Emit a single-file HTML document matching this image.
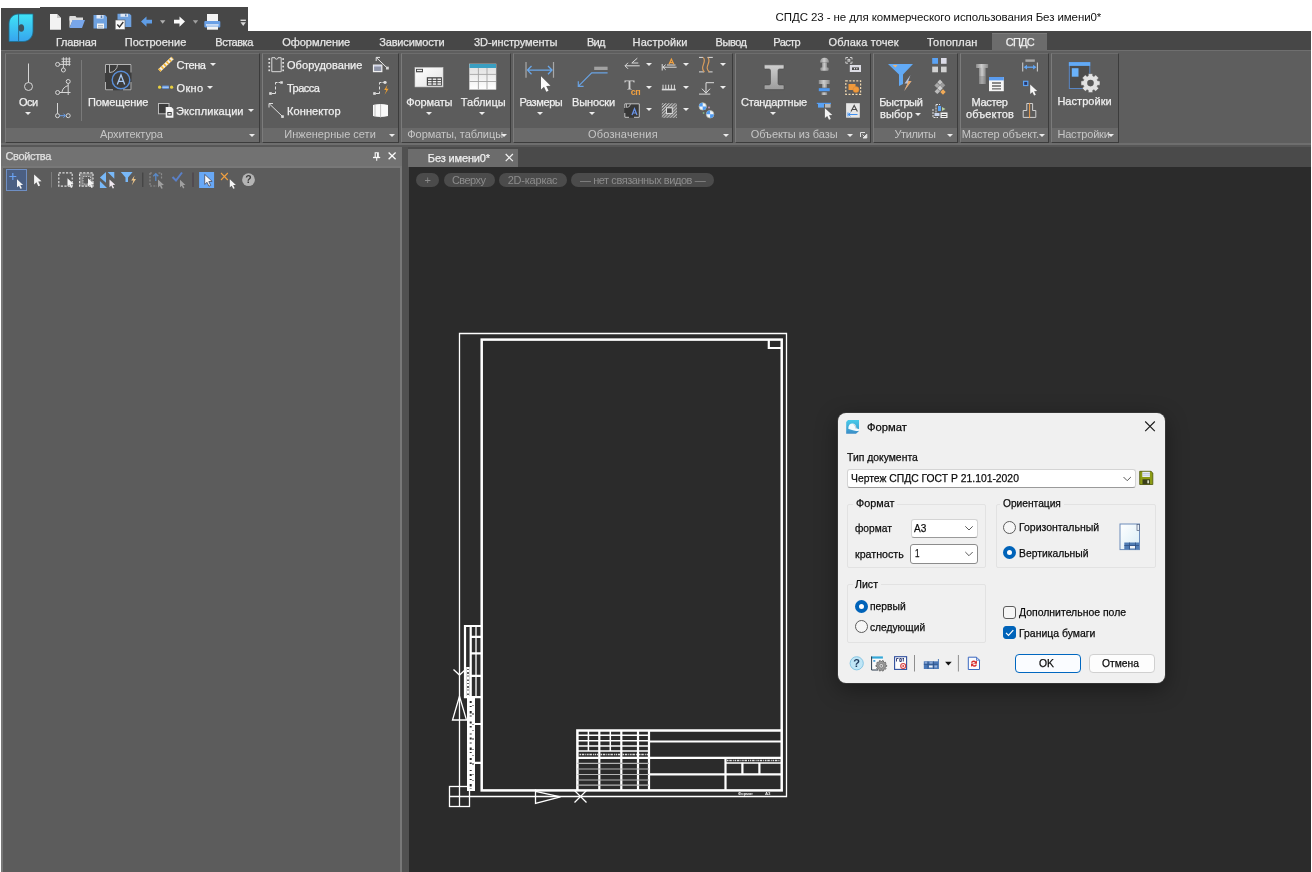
<!DOCTYPE html>
<html lang="ru"><head><meta charset="utf-8"><title>СПДС 23 - Без имени0*</title>
<style>
html,body{margin:0;padding:0;}
body{width:1312px;height:872px;overflow:hidden;background:#fff;position:relative;font-family:"Liberation Sans",sans-serif;}
.a{position:absolute;}
.t{position:absolute;white-space:pre;font-family:"Liberation Sans",sans-serif;}
svg{position:absolute;overflow:visible;}
.grp{position:absolute;top:53px;height:90px;box-sizing:border-box;background:#5c5c5c;border-top:1px solid #6d6d6d;border-left:1px solid #7b7b7b;border-right:1px solid #3c3c3c;border-bottom:1px solid #3c3c3c;}
.grp i{position:absolute;left:0;right:0;top:74px;bottom:0;background:#6a6a6a;}
.dd{position:absolute;width:0;height:0;margin-left:.3px;border-left:3.2px solid transparent;border-right:3.2px solid transparent;border-top:3.6px solid #ececec;}
.pill{position:absolute;top:172.500px;height:14.500px;border-radius:7.250px;background:#4b4b4b;}
.cb{position:absolute;box-sizing:border-box;background:#fff;border:1px solid #d4d4d4;border-bottom-color:#9a9a9a;border-radius:3px;}
.gb{position:absolute;box-sizing:border-box;border:1px solid #e2e2e2;border-radius:2px;}
.btn{position:absolute;box-sizing:border-box;background:#fdfdfd;border:1px solid #d0d0d0;border-radius:4px;}
.rd{position:absolute;box-sizing:border-box;width:13px;height:13px;border-radius:50%;border:1px solid #5c5c5c;background:#f6f6f6;}
.rd.on{border:4px solid #0063b9;background:#fff;}
.ck{position:absolute;box-sizing:border-box;width:13px;height:13px;border-radius:3px;border:1px solid #5c5c5c;background:#f6f6f6;}
.gl{position:absolute;background:#f0f0f0;height:12px;}
#w{position:absolute;left:0;top:0;width:1312px;height:872px;will-change:transform;}
</style></head><body><div id="w">
<!-- window chrome -->
<div class="a" style="left:1px;top:8px;width:40px;height:30px;background:#474747"></div>
<div class="a" style="left:40px;top:7px;width:208px;height:30px;background:#474747"></div>
<div class="a" style="left:1px;top:31px;width:1310px;height:20px;background:#474747"></div>
<div class="a" style="left:1px;top:50px;width:1310px;height:1px;background:#6f6f6f"></div>
<div class="a" style="left:1px;top:51px;width:1310px;height:94px;background:#5e5e5e"></div>
<div class="a" style="left:1px;top:143px;width:1310px;height:2px;background:#6e6e6e"></div>
<div class="a" style="left:1px;top:145px;width:1310px;height:2px;background:#575757"></div>
<!-- active tab -->
<div class="a" style="left:992px;top:33px;width:55px;height:18px;background:#6c6c6c;border-top:1px solid #7a7a7a;box-sizing:border-box"></div>

<!-- window title -->
<span class="t" style="left:775.6px;top:9.8px;font-size:11.5px;line-height:15px;color:#111;letter-spacing:-0.091px;">СПДС 23 - не для коммерческого использования Без имени0*</span>
<!-- tabs -->
<span class="t" style="left:55.9px;top:34.5px;font-size:11px;line-height:14px;color:#e6e6e6;letter-spacing:-0.196px;-webkit-text-stroke:.25px;">Главная</span>
<span class="t" style="left:124.8px;top:34.5px;font-size:11px;line-height:14px;color:#e6e6e6;letter-spacing:0.023px;-webkit-text-stroke:.25px;">Построение</span>
<span class="t" style="left:215.3px;top:34.5px;font-size:11px;line-height:14px;color:#e6e6e6;letter-spacing:-0.484px;-webkit-text-stroke:.25px;">Вставка</span>
<span class="t" style="left:282.2px;top:34.5px;font-size:11px;line-height:14px;color:#e6e6e6;letter-spacing:-0.028px;-webkit-text-stroke:.25px;">Оформление</span>
<span class="t" style="left:379.2px;top:34.5px;font-size:11px;line-height:14px;color:#e6e6e6;letter-spacing:-0.142px;-webkit-text-stroke:.25px;">Зависимости</span>
<span class="t" style="left:474.1px;top:34.5px;font-size:11px;line-height:14px;color:#e6e6e6;letter-spacing:-0.104px;-webkit-text-stroke:.25px;">3D-инструменты</span>
<span class="t" style="left:586.9px;top:34.5px;font-size:11px;line-height:14px;color:#e6e6e6;letter-spacing:-0.702px;-webkit-text-stroke:.25px;">Вид</span>
<span class="t" style="left:632.6px;top:34.5px;font-size:11px;line-height:14px;color:#e6e6e6;letter-spacing:0.107px;-webkit-text-stroke:.25px;">Настройки</span>
<span class="t" style="left:715.6px;top:34.5px;font-size:11px;line-height:14px;color:#e6e6e6;letter-spacing:-0.473px;-webkit-text-stroke:.25px;">Вывод</span>
<span class="t" style="left:773.3px;top:34.5px;font-size:11px;line-height:14px;color:#e6e6e6;letter-spacing:-0.610px;-webkit-text-stroke:.25px;">Растр</span>
<span class="t" style="left:828.6px;top:34.5px;font-size:11px;line-height:14px;color:#e6e6e6;letter-spacing:0.135px;-webkit-text-stroke:.25px;">Облака точек</span>
<span class="t" style="left:927.0px;top:34.5px;font-size:11px;line-height:14px;color:#e6e6e6;letter-spacing:0.259px;-webkit-text-stroke:.25px;">Топоплан</span>
<span class="t" style="left:1005.8px;top:34.5px;font-size:11px;line-height:14px;color:#f0f0f0;letter-spacing:-0.762px;-webkit-text-stroke:.25px;">СПДС</span>
<!-- groups -->
<div class="grp" style="left:5px;width:255px"><i></i></div>
<div class="grp" style="left:262px;width:137px"><i></i></div>
<div class="grp" style="left:401px;width:110px"><i></i></div>
<div class="grp" style="left:513px;width:220px"><i></i></div>
<div class="grp" style="left:735px;width:136px"><i></i></div>
<div class="grp" style="left:873px;width:85px"><i></i></div>
<div class="grp" style="left:960px;width:89px"><i></i></div>
<div class="grp" style="left:1051px;width:68px"><i></i></div>
<!-- group 1 -->
<div class="a" style="left:81px;top:60px;width:1px;height:61px;background:#7a7a7a"></div>
<span class="t" style="left:18.9px;top:94.5px;font-size:11px;line-height:14px;color:#efefef;letter-spacing:-0.434px;-webkit-text-stroke:.25px;">Оси</span>
<div class="dd" style="left:24.5px;top:112px"></div>
<span class="t" style="left:88.0px;top:94.5px;font-size:11px;line-height:14px;color:#efefef;letter-spacing:-0.099px;-webkit-text-stroke:.25px;">Помещение</span>
<span class="t" style="left:176.6px;top:58.0px;font-size:11px;line-height:14px;color:#efefef;letter-spacing:-0.454px;-webkit-text-stroke:.25px;">Стена</span>
<div class="dd" style="left:209.3px;top:63px"></div>
<span class="t" style="left:176.6px;top:81.0px;font-size:11px;line-height:14px;color:#efefef;letter-spacing:0.284px;-webkit-text-stroke:.25px;">Окно</span>
<div class="dd" style="left:207.1px;top:86px"></div>
<span class="t" style="left:176.0px;top:103.6px;font-size:11px;line-height:14px;color:#efefef;letter-spacing:0.089px;-webkit-text-stroke:.25px;">Экспликации</span>
<div class="dd" style="left:247.5px;top:109px"></div>
<span class="t" style="left:99.9px;top:127.2px;font-size:11px;line-height:14px;color:#c6c6c6;letter-spacing:-0.074px;">Архитектура</span>
<div class="dd" style="left:248.7px;top:134px"></div>
<!-- group 2 -->
<span class="t" style="left:287.0px;top:58.2px;font-size:11px;line-height:14px;color:#efefef;letter-spacing:0.056px;-webkit-text-stroke:.25px;">Оборудование</span>
<span class="t" style="left:287.0px;top:80.9px;font-size:11px;line-height:14px;color:#efefef;letter-spacing:-0.528px;-webkit-text-stroke:.25px;">Трасса</span>
<span class="t" style="left:287.0px;top:103.7px;font-size:11px;line-height:14px;color:#efefef;letter-spacing:0.101px;-webkit-text-stroke:.25px;">Коннектор</span>
<span class="t" style="left:284.3px;top:127.2px;font-size:11px;line-height:14px;color:#c6c6c6;letter-spacing:0.009px;">Инженерные сети</span>
<div class="dd" style="left:388.3px;top:134px"></div>
<!-- group 3 -->
<span class="t" style="left:406.2px;top:94.5px;font-size:11px;line-height:14px;color:#efefef;letter-spacing:-0.112px;-webkit-text-stroke:.25px;">Форматы</span>
<div class="dd" style="left:425.5px;top:112px"></div>
<span class="t" style="left:460.8px;top:94.5px;font-size:11px;line-height:14px;color:#efefef;letter-spacing:-0.003px;-webkit-text-stroke:.25px;">Таблицы</span>
<div class="dd" style="left:478.5px;top:112px"></div>
<span class="t" style="left:407.3px;top:127.2px;font-size:11px;line-height:14px;color:#c6c6c6;letter-spacing:-0.063px;">Форматы, таблицы</span>
<div class="dd" style="left:500.3px;top:134px"></div>
<!-- group 4 -->
<span class="t" style="left:519.4px;top:94.5px;font-size:11px;line-height:14px;color:#efefef;letter-spacing:-0.388px;-webkit-text-stroke:.25px;">Размеры</span>
<div class="dd" style="left:537px;top:112px"></div>
<span class="t" style="left:572.0px;top:94.5px;font-size:11px;line-height:14px;color:#efefef;letter-spacing:-0.129px;-webkit-text-stroke:.25px;">Выноски</span>
<div class="dd" style="left:588.7px;top:112px"></div>
<span class="t" style="left:588.0px;top:127.2px;font-size:11px;line-height:14px;color:#c6c6c6;letter-spacing:0.175px;">Обозначения</span>
<div class="dd" style="left:722.5px;top:134px"></div>
<!-- group 5 -->
<span class="t" style="left:741.0px;top:94.5px;font-size:11px;line-height:14px;color:#efefef;letter-spacing:-0.237px;-webkit-text-stroke:.25px;">Стандартные</span>
<div class="dd" style="left:770px;top:112px"></div>
<span class="t" style="left:750.7px;top:127.2px;font-size:11px;line-height:14px;color:#c6c6c6;letter-spacing:-0.050px;">Объекты из базы</span>
<div class="dd" style="left:847px;top:134px"></div>
<!-- group 6 -->
<span class="t" style="left:879.3px;top:94.5px;font-size:11px;line-height:14px;color:#efefef;letter-spacing:-0.392px;-webkit-text-stroke:.25px;">Быстрый</span>
<span class="t" style="left:880.0px;top:106.7px;font-size:11px;line-height:14px;color:#efefef;letter-spacing:0.081px;-webkit-text-stroke:.25px;">выбор</span>
<div class="dd" style="left:915px;top:113px"></div>
<span class="t" style="left:894.5px;top:127.2px;font-size:11px;line-height:14px;color:#c6c6c6;letter-spacing:-0.398px;">Утилиты</span>
<div class="dd" style="left:947px;top:134px"></div>
<!-- group 7 -->
<span class="t" style="left:971.6px;top:94.5px;font-size:11px;line-height:14px;color:#efefef;letter-spacing:-0.344px;-webkit-text-stroke:.25px;">Мастер</span>
<span class="t" style="left:966.0px;top:106.7px;font-size:11px;line-height:14px;color:#efefef;letter-spacing:0.130px;-webkit-text-stroke:.25px;">объектов</span>
<span class="t" style="left:961.8px;top:127.2px;font-size:11px;line-height:14px;color:#c6c6c6;letter-spacing:-0.055px;">Мастер объект.</span>
<div class="dd" style="left:1038.8px;top:134px"></div>
<!-- group 8 -->
<span class="t" style="left:1057.4px;top:94.3px;font-size:11px;line-height:14px;color:#efefef;letter-spacing:0.040px;-webkit-text-stroke:.25px;">Настройки</span>
<span class="t" style="left:1057.4px;top:127.2px;font-size:11px;line-height:14px;color:#c6c6c6;letter-spacing:-0.182px;">Настройки</span>
<div class="dd" style="left:1108px;top:134px"></div>
<!--G4DD-->
<div class="dd" style="left:645.5px;top:62.7px"></div>
<div class="dd" style="left:645.5px;top:85.7px"></div>
<div class="dd" style="left:645.5px;top:108.4px"></div>
<div class="dd" style="left:682.8px;top:62.7px"></div>
<div class="dd" style="left:682.8px;top:85.7px"></div>
<div class="dd" style="left:682.8px;top:108.4px"></div>
<div class="dd" style="left:720.2px;top:62.7px"></div>
<div class="dd" style="left:720.2px;top:85.7px"></div>
<span class="t" style="left:630.8px;top:86.3px;font-size:9px;line-height:12px;color:#f0a040;letter-spacing:-0.627px;font-weight:700;">сп</span>

<!-- left panel -->
<div class="a" style="left:1px;top:147px;width:1310px;height:725px;background:#505050"></div>
<div class="a" style="left:1px;top:147px;width:401px;height:19px;background:#727272"></div>
<div class="a" style="left:1px;top:166px;width:401px;height:706px;background:#787878"></div>
<div class="a" style="left:2.500px;top:167.500px;width:397px;height:705px;background:#5c5c5c"></div>
<!-- doc tabs -->
<div class="a" style="left:408px;top:147px;width:903px;height:20px;background:#4a4a4a"></div>
<div class="a" style="left:408px;top:148.500px;width:110px;height:18.500px;background:#6c6c6c"></div>
<!-- drawing area -->
<div class="a" style="left:409px;top:167px;width:902px;height:705px;background:#2b2b2b"></div>
<span class="t" style="left:5.5px;top:148.6px;font-size:11px;line-height:14px;color:#e0e0e0;letter-spacing:-0.352px;-webkit-text-stroke:.25px;">Свойства</span>
<span class="t" style="left:427.8px;top:150.5px;font-size:11px;line-height:14px;color:#f0f0f0;letter-spacing:-0.131px;-webkit-text-stroke:.25px;">Без имени0*</span>
<div class="pill" style="left:415.5px;width:23.5px"></div>
<div class="pill" style="left:443.6px;width:51.3px"></div>
<div class="pill" style="left:498.5px;width:68.5px"></div>
<div class="pill" style="left:570.8px;width:143.6px"></div>
<span class="t" style="left:424.5px;top:173.0px;font-size:11px;line-height:14px;color:#8c8c8c;letter-spacing:-0.438px;">+</span>
<span class="t" style="left:451.9px;top:173.2px;font-size:11px;line-height:14px;color:#8c8c8c;letter-spacing:-0.547px;">Сверху</span>
<span class="t" style="left:507.7px;top:173.2px;font-size:11px;line-height:14px;color:#8c8c8c;letter-spacing:-0.221px;">2D-каркас</span>
<span class="t" style="left:580.0px;top:173.2px;font-size:11px;line-height:14px;color:#8c8c8c;letter-spacing:-0.442px;">— нет связанных видов —</span>

<svg width="1312" height="872" viewBox="0 0 1312 872" style="left:0;top:0">
<defs>
<linearGradient id="lg" x1="0" y1="0" x2="0" y2="1"><stop offset="0" stop-color="#40e4f6"/><stop offset="1" stop-color="#36a4ee"/></linearGradient>
<linearGradient id="met" x1="0" y1="0" x2="1" y2="0"><stop offset="0" stop-color="#9a9a9a"/><stop offset=".5" stop-color="#e0e0e0"/><stop offset="1" stop-color="#8e8e8e"/></linearGradient>
</defs>
<!-- app logo -->
<path d="M9 41.5V24c0-6 4-10 10-10h14v17c0 6-4 10.500-10 10.500z" fill="url(#lg)" stroke="#1d6f8f" stroke-width=".8"/>
<path d="M18.600 14v27.500" stroke="#2a6f92" stroke-width="1"/>
<ellipse cx="21.300" cy="28" rx="2.800" ry="3.800" fill="#3d5560"/>
<!-- QAT: new -->
<path d="M50 14h7l4 4v11.800H50z" fill="#f2f2f2"/><path d="M57 14v4h4z" fill="#c8c8c8"/>
<!-- open -->
<path d="M69.500 16h6l1 1.500h6.500v3h-13.500z" fill="#dcdcdc"/><path d="M69.500 17v10.800l3-7z" fill="#e6e6e6"/>
<path d="M72.500 20h12.500l-3 8h-12.500z" fill="#78a6ea"/>
<!-- save -->
<path d="M93.500 15h11.500l2 2v11.500h-13.500z" fill="#6fa2e0"/>
<rect x="96.500" y="15" width="7" height="3.500" fill="#e8eef8"/><rect x="100.700" y="15.500" width="1.600" height="2.500" fill="#5a7fb0"/>
<rect x="97" y="23.500" width="7" height="5" fill="#f4f4f4"/><rect x="98" y="25" width="5" height=".8" fill="#9ab"/><rect x="98" y="26.700" width="5" height=".8" fill="#9ab"/>
<!-- save all -->
<path d="M117.500 13.800h12l1.800 1.800v11.400h-13.800z" fill="#6fa2e0"/><rect x="120.500" y="13.800" width="7.500" height="3" fill="#dfe8f5"/><rect x="125" y="14.300" width="1.500" height="2" fill="#5a7fb0"/>
<rect x="115.200" y="20" width="9.800" height="9.600" fill="#fafafa" stroke="#555" stroke-width=".6"/>
<path d="M117.300 24.500l2.200 2.500l3.800-5" fill="none" stroke="#333" stroke-width="1.300"/>
<!-- undo / redo -->
<path d="M141 21.600l5.500-5.200v3.400h5.500v3.600h-5.500v3.400z" fill="#5f9de6"/>
<path d="M160 20.300h5.400l-2.700 3.400z" fill="#b0b0b0"/>
<path d="M185 21.600l-5.500-5.200v3.400h-5.500v3.600h5.500v3.400z" fill="#fafafa"/>
<path d="M192.800 20.300h5.400l-2.700 3.400z" fill="#a0a0a0"/>
<!-- print -->
<rect x="207" y="14" width="11" height="7.500" fill="#f4f4f4"/>
<rect x="204.300" y="21" width="16" height="6.500" rx="1" fill="#6aa0e6"/>
<rect x="206" y="24.300" width="12.600" height="1.300" fill="#eef3fb"/>
<rect x="207" y="26.500" width="11" height="3.200" fill="#f4f4f4"/>
<!-- qat customize -->
<rect x="240.500" y="19.600" width="5.400" height="1.400" fill="#d8d8d8"/><path d="M240.500 22.300h5.400l-2.700 3.600z" fill="#d8d8d8"/>

<!-- G1: Оси -->
<g fill="none" stroke="#d6d6d6" stroke-width="1">
<path d="M28.500 63.500V82.500"/><circle cx="28.500" cy="86.500" r="4"/>
<circle cx="57.600" cy="64.400" r="2"/><circle cx="63.400" cy="70" r="2"/>
<path d="M59.600 64.400H70.500M61.500 61.700H70.500M61.500 59H70.500M63.400 57.300V68M66.300 57.300V65.800M69.300 57.300V65.800"/>
<circle cx="57.600" cy="92.500" r="2"/><circle cx="68.200" cy="81.500" r="2"/>
<path d="M59.600 92.500H70.500M68.200 83.500V95M61.800 92.500C62.500 88.500 65 86.300 68.200 85.600"/>
<path d="M57.500 103V113.700"/><circle cx="57.500" cy="115.700" r="2"/><circle cx="68.200" cy="115.700" r="2"/>
</g>
<path d="M59.500 115.700H65.500M63.500 113.700l2 2l-2 2" fill="none" stroke="#6aa0ea" stroke-width="1"/>
<!-- Помещение -->
<rect x="105" y="64" width="26.500" height="26.300" fill="#3d3d3d"/>
<g fill="none" stroke="#b4b4b4" stroke-width="1">
<path d="M105.500 73V64.500H131V72.500M131 82V89.800H123M113 89.800H105.500V82"/>
<path d="M109.500 64.500V72.500M109.500 72.500A8 8 0 0 0 117.500 64.500"/>
</g>
<circle cx="121" cy="80" r="8.800" fill="none" stroke="#5a8fd8" stroke-width="1.400"/>
<path d="M117.300 84.500L121 74.800L124.700 84.500M118.600 81.300H123.400" fill="none" stroke="#a9c9f2" stroke-width="1.300"/>
<!-- Стена -->
<path d="M159.300 70.500L172.500 58" stroke="#f4f0e6" stroke-width="3.400"/>
<path d="M159.300 70.500L172.500 58" stroke="#f0b232" stroke-width="3.400" stroke-dasharray="1.600 1.900"/>
<!-- Окно -->
<circle cx="159.600" cy="87.200" r="1.600" fill="#e8d040"/><circle cx="171.600" cy="87.200" r="1.600" fill="#e8d040"/>
<rect x="162.300" y="85.600" width="6.500" height="3.200" fill="#5f98e8"/><rect x="162.300" y="86.800" width="6.500" height=".8" fill="#cfe0f8"/>
<!-- Экспликации -->
<rect x="158.500" y="103.500" width="10.500" height="10.300" fill="#3d3d3d" stroke="#bdbdbd" stroke-width="1"/>
<path d="M165.700 107h5.700l2 2v8.800h-7.700z" fill="#f4f4f4"/>
<rect x="167.300" y="112" width="4.400" height="3.600" fill="#3d3d3d"/><rect x="168.300" y="113" width="2.400" height="1.600" fill="#e8e8e8"/>

<!-- G2 -->
<path d="M271.800 57.700H275a1.500 1.500 0 0 0 3 0H281.200V71.700H271.800z" fill="none" stroke="#dadada" stroke-width="1"/>
<g fill="#e2e2e2"><rect x="268.400" y="58.200" width="1.700" height="1.700"/><rect x="268.400" y="62" width="1.700" height="1.700"/><rect x="268.400" y="65.700" width="1.700" height="1.700"/><rect x="268.400" y="69.500" width="1.700" height="1.700"/>
<rect x="282.300" y="58.200" width="1.700" height="1.700"/><rect x="282.300" y="62" width="1.700" height="1.700"/><rect x="282.300" y="65.700" width="1.700" height="1.700"/><rect x="282.300" y="69.500" width="1.700" height="1.700"/></g>
<path d="M272 93.500H275.500V91.500M275.500 89.500V86.500M275.500 84.500V82.500H277.500M278.500 82.500H280" fill="none" stroke="#e0e0e0" stroke-width="1"/>
<rect x="269.200" y="92.200" width="2.600" height="2.600" fill="#e0e0e0"/><rect x="280.200" y="81.300" width="2.600" height="2.400" fill="#e0e0e0"/>
<path d="M282 116L269.300 103.800M269 107.500V103.500H273" fill="none" stroke="#dcdcdc" stroke-width="1"/><rect x="281.200" y="115.300" width="2.600" height="2.600" fill="#e0e0e0"/>
<path d="M387 67.800L376.500 57.700M376.200 61V57.400H380" fill="none" stroke="#e4e4e4" stroke-width="1"/><rect x="386" y="66.700" width="2.800" height="2.800" fill="#d8d8d8"/>
<rect x="373.500" y="65.100" width="8.300" height="6.500" fill="#8f95a8" stroke="#f0f0f0" stroke-width="1.200"/><rect x="374" y="65.200" width="7.400" height="1.300" fill="#d9dcf0"/>
<path d="M376 93.500H379.500V91.500M379.500 89.500V86.500M379.500 84.500V82.500H381.500M382.500 82.500H383.500" fill="none" stroke="#e0e0e0" stroke-width="1"/>
<rect x="373.200" y="92.200" width="2.600" height="2.600" fill="#e0e0e0"/><ellipse cx="385" cy="82.500" rx="1.700" ry="1.400" fill="#e0e0e0"/>
<path d="M387.500 84.700l-3.300 5.300h2.200l-1.800 4.700l4-6h-2.300z" fill="#f0a030"/>
<path d="M373 105q7.500-2 15 0v11q-7.500 2-15 0z" fill="#fafafa"/><path d="M375 104.600v12M380.600 104v13.600" stroke="#b9b9b9" stroke-width=".9"/>

<!-- G3 -->
<defs><linearGradient id="wg" x1="0" y1="0" x2="1" y2="1"><stop offset="0" stop-color="#ffffff"/><stop offset="1" stop-color="#e2e2e2"/></linearGradient>
<linearGradient id="cg" x1="0" y1="0" x2="0" y2="1"><stop offset="0" stop-color="#dedede"/><stop offset="1" stop-color="#ffffff"/></linearGradient></defs>
<rect x="415" y="67.600" width="28" height="19.300" fill="url(#wg)" stroke="#cfcfcf" stroke-width=".6"/>
<rect x="416" y="68.800" width="7" height="3.500" fill="#4a4a4a"/><rect x="417" y="69.800" width="5" height="1.300" fill="#f0f0f0"/>
<rect x="426.800" y="77.200" width="15.100" height="8.500" fill="#454545"/>
<g fill="#f4f4f4"><rect x="428" y="78.500" width="3.600" height="1.400"/><rect x="432.700" y="78.500" width="3.600" height="1.400"/><rect x="437.400" y="78.500" width="3.600" height="1.400"/>
<rect x="428" y="80.900" width="3.600" height="1.500"/><rect x="432.700" y="80.900" width="3.600" height="1.500"/><rect x="437.400" y="80.900" width="3.600" height="1.500"/>
<rect x="428" y="83.300" width="3.600" height="1.500"/><rect x="432.700" y="83.300" width="3.600" height="1.500"/><rect x="437.400" y="83.300" width="3.600" height="1.500"/></g>
<rect x="469.500" y="64" width="26.500" height="25.400" fill="url(#cg)" stroke="#d8d8d8" stroke-width=".6"/>
<rect x="469.500" y="64" width="26.500" height="4" fill="#3a9fc2"/>
<path d="M478.400 68V89.400M487 68V89.400M469.500 74.400H496M469.500 81.500H496" stroke="#a4a4a4" stroke-width=".9"/>
<!-- G4 big -->
<path d="M526 62V77.700M553.500 62V77.700" stroke="#a8a8a8" stroke-width="1.200"/>
<path d="M527.500 70.100H552M531.500 66l-4 4.100l4 4.100M548 66l4 4.100l-4 4.100" fill="none" stroke="#69a7ea" stroke-width="1.300"/>
<path d="M541 76.300V89.500l3-2.700l2.300 4.900l2.200-1l-2.300-4.800l4.300-.2z" fill="#fafafa"/>
<rect x="594.200" y="66.700" width="13.400" height="3.300" fill="#a2a2a2"/>
<path d="M607.600 72.800H591.700L578.500 86.200M578.300 81.300V86.400H583.600" fill="none" stroke="#69a2e2" stroke-width="1.200"/>

<!-- G4 small -->
<g fill="none" stroke="#dcdcdc" stroke-width="1">
<path d="M625 65.800H639.700M628 62.800l-3 3l3 3M637.300 58.200L631.800 63H638.300"/>
<path d="M662.200 64V70.500M662.700 67.200H676.600M665.700 64.600l-2.800 2.600l2.800 2.600M667 65H675.500"/>
<path d="M661.800 89.600H675.800" stroke-width="1.600"/><path d="M663 84.700V89M665.800 84.700V89M668.600 84.700V89M671.400 84.700V89M674.400 84.700V89"/>
<path d="M699 57.400H703M707.500 57.400H712.800M699 71.900H704M708.300 71.900H712.600"/>
<path d="M706 93.200V82.700H714M702 88.700l4 4.500l4-4.500M699 94.100H710.300"/>
</g>
<path d="M669 64.300L671.400 59.200L673.800 64.300M669.900 62.600H672.900" fill="none" stroke="#f0a040" stroke-width="1.200"/>
<path d="M703 57.400c5 4-4.500 10 1.500 14.500M707.600 57.400c5 4-4.500 10 1.800 14.500" fill="none" stroke="#d89c5c" stroke-width="1.200"/>
<path d="M624.500 80.400h10v2.200h-.8c-.2-1-.6-1.300-1.600-1.300h-1.700v6.600c0 .7.300.9 1.400 1v.5h-4.600v-.5c1.100-.1 1.400-.3 1.400-1v-6.600h-1.700c-1 0-1.400.3-1.600 1.300h-.8z" fill="#d4d4d4"/>
<rect x="624.300" y="103.300" width="15.500" height="14.500" fill="#383838"/>
<path d="M624.800 108V103.800H639.300V117.300H634M629 117.300H624.800V113" fill="none" stroke="#c8c8c8" stroke-width="1"/>
<path d="M626.500 104v3.500M626.500 107.500a4 4 0 0 0 4-3.700" fill="none" stroke="#b0b0b0" stroke-width="1"/>
<path d="M632 115L634.500 108.700L637 115M632.900 113H636.100" fill="none" stroke="#6a94ea" stroke-width="1.200"/>
<defs><pattern id="ht" width="2.200" height="2.200" patternUnits="userSpaceOnUse" patternTransform="rotate(-45)"><rect width="2.200" height="1.100" fill="#c4c4c4"/></pattern></defs>
<rect x="661.800" y="103.300" width="15.200" height="14.500" fill="url(#ht)"/>
<rect x="666.500" y="107.800" width="5.800" height="5.600" fill="#4a4a4a" stroke="#e0e0e0" stroke-width="1"/>
<g><circle cx="702.700" cy="106.400" r="3.700" fill="#eef4fc" stroke="#b8b49c" stroke-width=".7"/><path d="M702.700 106.400V102.700A3.700 3.700 0 0 0 699 106.400zM702.700 106.400V110.100A3.700 3.700 0 0 0 706.400 106.400z" fill="#4f9af0"/>
<circle cx="710.100" cy="114.300" r="3.800" fill="#eef4fc" stroke="#b8b49c" stroke-width=".7"/><path d="M710.100 114.300V110.500A3.800 3.800 0 0 0 706.300 114.300zM710.100 114.300V118.100A3.800 3.800 0 0 0 713.900 114.300z" fill="#4f9af0"/>
<circle cx="709" cy="107.600" r="1" fill="#c090b0"/><circle cx="703.600" cy="113" r=".9" fill="#80b080"/></g>

<!-- G5 -->
<defs><linearGradient id="ib" x1="0" y1="0" x2="0" y2="1"><stop offset="0" stop-color="#cfcfcf"/><stop offset="1" stop-color="#9c9c9c"/></linearGradient>
<linearGradient id="mh" x1="0" y1="0" x2="1" y2="0"><stop offset="0" stop-color="#8c8c8c"/><stop offset=".45" stop-color="#cdcdcd"/><stop offset="1" stop-color="#8a8a8a"/></linearGradient></defs>
<path d="M764.200 64.800H784V68.200Q784 69 783 69H779.500Q778 69 778 70.500V83.500Q778 84.900 779.500 84.900H783Q784 84.900 784 85.700V89.600H764.200V85.700Q764.200 84.900 765.200 84.900H769Q770.500 84.900 770.500 83.500V70.500Q770.500 69 769 69H765.200Q764.200 69 764.200 68.200z" fill="url(#ib)" stroke="#4c4c4c" stroke-width=".6"/>
<path d="M820 62.500Q820 57.800 824.500 57.800Q829 57.800 829 62.500z" fill="url(#mh)"/><rect x="822" y="62.500" width="5" height="5.500" fill="url(#mh)"/><rect x="820.300" y="67.600" width="8.400" height="3.100" rx="1" fill="url(#mh)"/>
<g fill="none" stroke="#cfcfcf" stroke-width="1"><path d="M845.800 59.500V57.500H848M850 57.500H852V59.500M852 61.500V63.200H850M848 63.200H845.800V61.500"/><rect x="848" y="59.400" width="1.800" height="1.800"/></g>
<rect x="849.800" y="65" width="11.200" height="7" fill="#dcdce4"/><rect x="852" y="67.400" width="7" height="2.600" fill="#4a4a4a"/><rect x="854" y="68" width="1" height="1.400" fill="#dcdce4"/><rect x="856.300" y="68" width="1" height="1.400" fill="#dcdce4"/>
<rect x="818.800" y="80" width="10.900" height="4" fill="url(#mh)"/><rect x="822" y="84" width="5" height="3.700" fill="url(#mh)"/>
<rect x="818.800" y="88.200" width="10.900" height="3" fill="#4f9af2"/><rect x="821.500" y="92.300" width="5.600" height="2.700" fill="url(#mh)"/>
<rect x="845.800" y="80.800" width="14.800" height="13.600" fill="none" stroke="#f0d8b0" stroke-width="1.200" stroke-dasharray="2 1.500"/>
<rect x="848.500" y="84" width="7" height="6" fill="#f09a3c"/><circle cx="856" cy="89.600" r="3" fill="#f09a3c" stroke="#d08030" stroke-width=".5"/>
<rect x="816.800" y="102.800" width="14.200" height="1.200" fill="#4f9af2"/><rect x="818" y="103" width="6" height="4.600" fill="#5aa2f4"/><rect x="825" y="104" width="5.600" height="3.600" fill="#b8b8b8"/>
<path d="M824.900 108.300V118l2.300-2l1.800 3.700l1.800-.8l-1.800-3.700l3.300-.2z" fill="#f4f4f4"/>
<rect x="846.100" y="103.200" width="13.700" height="14.500" fill="#e6e6e6"/>
<path d="M851 111.500L854.200 105.400L857.400 111.500M852.200 109.500H856.200" fill="none" stroke="#4a4a4a" stroke-width="1.100"/>
<path d="M848 112.500V116.500M848.500 114.500H857.500M850.500 112.700l-2 1.800l2 1.800" fill="none" stroke="#3d8ef0" stroke-width="1"/>

<!-- G6 -->
<path d="M888 64H913L903 74.500V84L899 86V74.500z" fill="#62aaf6"/><path d="M892.500 65h5l-2 2.500z" fill="#e8b478"/>
<path d="M910.500 75l-6 8.500h3l-3.300 7.500l7.300-10h-3.200z" fill="#b4c0dc"/><path d="M907.500 83.500l-3.300 7.500l7.300-10h-3.200z" fill="#e8a868"/>
<rect x="932.200" y="58" width="5.800" height="5.800" fill="#5aa2f4"/><rect x="941" y="58" width="5.600" height="5.800" fill="#dcdce8"/><rect x="932.200" y="66.600" width="5.800" height="5.700" fill="#d2d2d2"/><rect x="941" y="66.600" width="5.600" height="5.700" fill="#d2d2d2"/>
<g><path d="M940 79.6L942.7 82.3L940 85.0L937.3 82.3z" fill="#c4c4c4"/><path d="M937.1 82.7L939.8000000000001 85.4L937.1 88.10000000000001L934.4 85.4z" fill="#a8a8a8"/><path d="M942.6 82.5L945.3000000000001 85.2L942.6 87.9L939.9 85.2z" fill="#9c9c9c"/><path d="M940 85.6L942.7 88.3L940 91.0L937.3 88.3z" fill="#d0d0d0"/><path d="M937.3 88.7L940.0 91.4L937.3 94.10000000000001L934.5999999999999 91.4z" fill="#bcbcbc"/><path d="M943 89.3L945.7 92L943 94.7L940.3 92z" fill="#f0aa58"/></g>
<path d="M936 104.500V113.500M933 109V117.500H938M936 104.500H940" fill="none" stroke="#e0e0e0" stroke-width="1" stroke-dasharray="2 1"/>
<rect x="938" y="106" width="3" height="5" fill="#5aa2f4"/><path d="M942 107l3.500 2l-3.500 2z" fill="#b8d0a0"/><rect x="934.500" y="113" width="5" height="3" fill="#c8d4ec"/>
<rect x="940.500" y="112.500" width="7" height="5.500" fill="#f4f4f4"/><rect x="941.700" y="114" width="4.600" height="1" fill="#555"/><rect x="941.700" y="116" width="4.600" height="1" fill="#555"/>
<!-- G7 -->
<rect x="976" y="64" width="12.100" height="3.900" rx=".6" fill="url(#mh)"/><rect x="979" y="67.800" width="6.700" height="16.200" fill="url(#mh)"/>
<path d="M979 77H985.700M979 79H985.700M979 81H985.700M979 83H985.700" stroke="#7a7a7a" stroke-width=".8"/>
<rect x="989" y="77" width="14.800" height="14.200" fill="#f6f6f6"/><rect x="989" y="77" width="14.800" height="3.400" fill="#5a9cf0"/>
<path d="M992 83H1001M992 86H1001M992 88.900H1001" stroke="#666" stroke-width="1.300"/>
<rect x="1025.400" y="59.400" width="9.400" height="2.400" fill="#a8a8a8"/>
<path d="M1022.700 62.500V71.500M1037.400 62.500V71.500" stroke="#c8c8c8" stroke-width="1.100"/>
<path d="M1026 67.200H1034" stroke="#62a6f4" stroke-width="1.300"/><path d="M1023.600 67.200l3.400-2.400v4.800zM1036.500 67.200l-3.400-2.400v4.800z" fill="#62a6f4"/>
<rect x="1023.600" y="81.300" width="4.200" height="4.200" fill="#2c3a6a" stroke="#5aa2f4" stroke-width="1.200"/>
<path d="M1030.200 84.600V94l2.200-1.900l1.700 3.500l1.700-.8l-1.700-3.500l3.100-.2z" fill="#f4f4f4"/>
<path d="M1026.800 103.500H1032.600V110.500H1035.800V117.400H1023.200V110.500H1026.800z" fill="none" stroke="#d0d0d0" stroke-width="1"/><path d="M1029.600 103V118" stroke="#f0a050" stroke-width="1"/>
<!-- G8 -->
<rect x="1069.300" y="62.500" width="20.500" height="26" fill="#4c4c4c" stroke="#5a8cd0" stroke-width=".9"/><rect x="1068.900" y="62.200" width="21.300" height="3.700" fill="#62aaf6"/>
<rect x="1071.800" y="68.200" width="6.700" height="8.500" fill="#6ab2fa"/>
<path d="M1097.66 80.85L1099.97 80.99L1099.97 85.21L1097.66 85.35L1097.15 86.57L1098.69 88.30L1095.70 91.29L1093.97 89.75L1092.75 90.26L1092.61 92.57L1088.39 92.57L1088.25 90.26L1087.03 89.75L1085.30 91.29L1082.31 88.30L1083.85 86.57L1083.34 85.35L1081.03 85.21L1081.03 80.99L1083.34 80.85L1083.85 79.63L1082.31 77.90L1085.30 74.91L1087.03 76.45L1088.25 75.94L1088.39 73.63L1092.61 73.63L1092.75 75.94L1093.97 76.45L1095.70 74.91L1098.69 77.90L1097.15 79.63z" fill="#e2e2e2" stroke="#5a5a5a" stroke-width=".5" stroke-linejoin="round"/><circle cx="1090.500" cy="83.100" r="3.300" fill="#585858"/>

<!-- panel toolbar -->
<rect x="6.500" y="169.500" width="20" height="21" fill="#4b5f82" stroke="#6f8fc4" stroke-width="1"/>
<path d="M9.300 176.500H16.300M12.800 173V180" stroke="#6aa2f2" stroke-width="1.200"/>
<path d="M17.00 179.20L17.00 187.36L18.92 185.68L20.44 188.80L21.88 188.16L20.36 185.04L23.08 184.88z" fill="#f4f4f4"/>
<path d="M34.10 174.40L34.10 184.40L36.45 182.34L38.31 186.16L40.08 185.38L38.22 181.55L41.55 181.36z" fill="#f4f4f4"/>
<path d="M51.500 172V187.500" stroke="#7c7c7c" stroke-width="1"/>
<rect x="58.800" y="172.800" width="13.400" height="13.400" fill="none" stroke="#dcdcdc" stroke-width="1.200" stroke-dasharray="2.200 1.400"/>
<path d="M67.50 178.30L67.50 186.46L69.42 184.78L70.94 187.90L72.38 187.26L70.86 184.14L73.58 183.98z" fill="#f4f4f4"/>
<rect x="79.600" y="172.800" width="13.400" height="13.400" fill="#9a9a9a" fill-opacity=".55" stroke="#dcdcdc" stroke-width="1.200" stroke-dasharray="2.200 1.400"/>
<rect x="83" y="176.500" width="7.500" height="7.500" fill="#5c5c5c" stroke="#d0d0d0" stroke-width=".8" stroke-dasharray="1.500 1"/>
<path d="M88.00 178.30L88.00 186.46L89.92 184.78L91.44 187.90L92.88 187.26L91.36 184.14L94.08 183.98z" fill="#f4f4f4"/>
<path d="M106 171.900V182.800L99.900 177.400zM99.900 180.900V188.100H107zM107.600 171.900H114.300V178.700z" fill="#78b8f8"/>
<path d="M109.50 179.50L109.50 187.15L111.30 185.57L112.72 188.50L114.08 187.90L112.65 184.97L115.20 184.82z" fill="#f0e8f0"/>
<path d="M120.800 171.900H132.600L128 177.500V182H125.500V177.500z" fill="#78b8f8"/>
<path d="M134.600 175.500l-3.400 5h2.200l-1.600 4.800l4.200-6.200h-2.300z" fill="#ecc488"/>
<path d="M142.800 172.500V187" stroke="#3e3e3e" stroke-width="1"/>
<path d="M150 186H157M150 173V186M150 173H153M158.500 173H161.500V180" fill="none" stroke="#8c8c8c" stroke-width="1.200" stroke-dasharray="2 1.300"/>
<path d="M155.800 181V174M153.300 176.300l2.500-2.600l2.500 2.600" fill="none" stroke="#5a8ac8" stroke-width="1.300"/>
<path d="M158.00 179.50L158.00 187.46L159.87 185.82L161.35 188.86L162.76 188.24L161.28 185.19L163.93 185.04z" fill="#a0a0a0"/>
<path d="M172.500 177l3.500 3.500l6-8" fill="none" stroke="#5a80c8" stroke-width="2"/>
<path d="M180.00 179.80L180.00 187.14L181.73 185.63L183.10 188.44L184.39 187.86L183.02 185.06L185.47 184.91z" fill="#a0a0a0"/>
<path d="M193 172.500V187" stroke="#4a4048" stroke-width="1.200"/>
<rect x="199.100" y="172" width="15" height="16" fill="#68a8f6"/>
<path d="M204.70 174.40L204.70 184.40L207.05 182.34L208.91 186.16L210.68 185.38L208.82 181.55L212.15 181.36z" fill="#fafafa" stroke="#3a3a4a" stroke-width=".7"/>
<path d="M221 173L227.800 180M227.800 173L221 180" stroke="#f0a040" stroke-width="1.100"/>
<path d="M229.80 179.20L229.80 187.36L231.72 185.68L233.24 188.80L234.68 188.16L233.16 185.04L235.88 184.88z" fill="#f4f4f4"/>
<circle cx="248.500" cy="179.700" r="6.400" fill="#b4b4b4"/><text x="248.500" y="183.400" text-anchor="middle" font-size="10.500" font-weight="700" fill="#3c3c3c" font-family="Liberation Sans,sans-serif">?</text>
<!-- pin, close -->
<path d="M375.200 157V152.700H378.300V157M377.600 152.700V157" fill="none" stroke="#fafafa" stroke-width="1.100"/><path d="M373 157.500H380.200" stroke="#fafafa" stroke-width="1.300"/><path d="M376.700 158V160.800" stroke="#fafafa" stroke-width="1.100"/>
<path d="M388.600 152.500L395.600 159.300M395.600 152.500L388.600 159.300" stroke="#fafafa" stroke-width="1.300"/>
<path d="M505.700 154L512.900 161.200M512.900 154L505.700 161.200" stroke="#f0f0f0" stroke-width="1.200"/>
<!-- launcher -->
<path d="M860.500 137V132.500H865" fill="none" stroke="#e0e0e0" stroke-width="1"/><path d="M862.500 134.500L865 137M866.800 134.200V138H863z" fill="#e8e8e8" stroke="#e8e8e8" stroke-width=".9"/>
<!--MORE-->
</svg>

<svg width="1312" height="872" viewBox="0 0 1312 872" style="left:0;top:0" fill="none" stroke="#ffffff">
<g stroke-width="1.300">
<path d="M459.500 786.500V333.500H786.500V796.500H469.500"/>
<rect x="449.500" y="786.500" width="20" height="20"/>
<path d="M449.500 796.500H469.500M459.500 786.500V806.500"/>
<path d="M453.500 669.500l6 5.500l5.500-5"/>
<path d="M459.500 696.300L452.500 720H466.500z"/>
<path d="M535.500 789.500V803.500L560.500 796.800L535.500 791.300"/>
<path d="M574.500 790.500l12 12M586.500 790.500l-12 12"/>
</g>
<g stroke-width="2.500">
<rect x="481.700" y="339.600" width="300" height="450.800"/>
<path d="M577.400 790.300V730.400H781.700"/>
</g>
<g stroke-width="2.200">
<path d="M768.800 339.600V348H781.700"/>
<path d="M599.300 730.400V790.300M621.300 730.400V790.300M638 730.400V790.300M649 730.400V790.300"/>
<path d="M649 741.500H781.700M577.400 757.800H781.700M649 774.400H781.700"/>
<path d="M725.500 757.800V790.300M742.400 762.800V774.400M759.400 762.800V774.400"/>
<path d="M465 698V626H481.700M464 697.200H481.700M470.700 626V697"/>
<path d="M470.700 636.800H481.700M470.700 653.400H481.700M470.700 675.800H481.700M475 724H481.700M475 762.800H481.700"/>
</g>
<rect x="467" y="697" width="8" height="94" fill="#ffffff" stroke="none"/>
<rect x="466.200" y="667" width="3.500" height="30" fill="#ffffff" stroke="none"/>
<path d="M468 669V696" stroke="#2b2b2b" stroke-width="1.500" stroke-dasharray="1 2 2 1.500 1 3 1.500 2"/>
<path d="M470.700 701V789" stroke="#2b2b2b" stroke-width="2" stroke-dasharray="2 3 1 4 2.500 2 1 5 2 2.500 1.500 6 1 3"/>
<path d="M473 705V786" stroke="#2b2b2b" stroke-width="1" stroke-dasharray="1 7 2 9 1 5"/>
<g stroke-width="1.500">
<path d="M588.400 730.400V751M610.300 730.400V751"/>
<path d="M725.500 763H781.700"/>
<path d="M577.400 735.300H649M577.400 740.700H649M577.400 745.900H649M577.400 751.100H649"/>
</g>
<path d="M476 626V697" stroke-width="1.300"/>
<g stroke-width="1.200" stroke="#b4b4b4">
<path d="M577.400 763.400H649M577.400 769H649M577.400 774.500H649M577.400 780H649M577.400 785.200H649"/>
</g>
<g stroke="#e0e0e0" stroke-width="1.500" stroke-dasharray="1.500 .8 2.500 1 1 .8">
<path d="M579.500 754.600H598M600.500 754.600H620M622.500 754.600H637M639 754.600H648M727 760.500H780"/>
</g>
<text x="738" y="795.200" font-size="4.300" font-weight="700" fill="#f4f4f4" stroke="none" font-family="Liberation Sans,sans-serif" textLength="15" lengthAdjust="spacingAndGlyphs">Формат</text><text x="765" y="795.200" font-size="4.300" font-weight="700" fill="#f4f4f4" stroke="none" font-family="Liberation Sans,sans-serif">A3</text>
</svg>

<div class="a" style="left:838px;top:413px;width:326.500px;height:269.500px;background:#f0f0f0;border-radius:8px;box-shadow:0 0 0 1px rgba(70,70,70,.55),0 6px 22px rgba(0,0,0,.4)"></div>
<span class="t" style="left:866.5px;top:420.0px;font-size:11.5px;line-height:15px;color:#0a0a0a;transform-origin:0 50%;transform:scaleX(0.9765);-webkit-text-stroke:.25px;">Формат</span>
<span class="t" style="left:847.2px;top:449.8px;font-size:11.5px;line-height:15px;color:#0a0a0a;transform-origin:0 50%;transform:scaleX(0.9024);-webkit-text-stroke:.25px;">Тип документа</span>
<div class="cb" style="left:847px;top:468.500px;width:288.500px;height:19.500px"></div>
<span class="t" style="left:850.6px;top:471.1px;font-size:11.5px;line-height:15px;color:#0a0a0a;transform-origin:0 50%;transform:scaleX(0.9003);-webkit-text-stroke:.25px;">Чертеж СПДС ГОСТ Р 21.101-2020</span>
<div class="gb" style="left:846.500px;top:503.500px;width:139.500px;height:64px"></div>
<div class="gl" style="left:853px;top:497px;width:44px"></div>
<span class="t" style="left:856.0px;top:495.9px;font-size:11.5px;line-height:15px;color:#0a0a0a;transform-origin:0 50%;transform:scaleX(0.9398);-webkit-text-stroke:.25px;">Формат</span>
<div class="gb" style="left:995.500px;top:503.500px;width:160px;height:64px"></div>
<div class="gl" style="left:1000px;top:497px;width:64px"></div>
<span class="t" style="left:1003.0px;top:496.1px;font-size:11.5px;line-height:15px;color:#0a0a0a;transform-origin:0 50%;transform:scaleX(0.8867);-webkit-text-stroke:.25px;">Ориентация</span>
<span class="t" style="left:854.8px;top:520.9px;font-size:11.5px;line-height:15px;color:#0a0a0a;transform-origin:0 50%;transform:scaleX(0.8851);-webkit-text-stroke:.25px;">формат</span>
<div class="cb" style="left:910.500px;top:518.500px;width:67px;height:19px"></div>
<span class="t" style="left:914.2px;top:520.9px;font-size:11.5px;line-height:15px;color:#0a0a0a;transform-origin:0 50%;transform:scaleX(0.8737);-webkit-text-stroke:.25px;">A3</span>
<span class="t" style="left:854.8px;top:546.7px;font-size:11.5px;line-height:15px;color:#0a0a0a;transform-origin:0 50%;transform:scaleX(0.9279);-webkit-text-stroke:.25px;">кратность</span>
<div class="cb" style="left:910px;top:543.500px;width:67.500px;height:20px;border-color:#8c8c8c"></div>
<span class="t" style="left:914.5px;top:545.5px;font-size:11.5px;line-height:15px;color:#0a0a0a;transform-origin:0 50%;transform:scaleX(0.7024);-webkit-text-stroke:.25px;">1</span>
<div class="rd" style="left:1003px;top:520.500px"></div>
<span class="t" style="left:1018.9px;top:519.7px;font-size:11.5px;line-height:15px;color:#0a0a0a;transform-origin:0 50%;transform:scaleX(0.9118);-webkit-text-stroke:.25px;">Горизонтальный</span>
<div class="rd on" style="left:1003px;top:546.300px"></div>
<span class="t" style="left:1018.9px;top:545.5px;font-size:11.5px;line-height:15px;color:#0a0a0a;transform-origin:0 50%;transform:scaleX(0.8988);-webkit-text-stroke:.25px;">Вертикальный</span>
<div class="gb" style="left:846.500px;top:584px;width:139.500px;height:59px"></div>
<div class="gl" style="left:853px;top:578px;width:28px"></div>
<span class="t" style="left:855.2px;top:576.9px;font-size:11.5px;line-height:15px;color:#0a0a0a;transform-origin:0 50%;transform:scaleX(0.9200);-webkit-text-stroke:.25px;">Лист</span>
<div class="rd on" style="left:854.500px;top:599.500px"></div>
<span class="t" style="left:869.9px;top:598.5px;font-size:11.5px;line-height:15px;color:#0a0a0a;transform-origin:0 50%;transform:scaleX(0.8989);-webkit-text-stroke:.25px;">первый</span>
<div class="rd" style="left:854.500px;top:620.400px"></div>
<span class="t" style="left:869.9px;top:619.5px;font-size:11.5px;line-height:15px;color:#0a0a0a;transform-origin:0 50%;transform:scaleX(0.8887);-webkit-text-stroke:.25px;">следующий</span>
<div class="ck" style="left:1003px;top:605.500px"></div>
<span class="t" style="left:1018.9px;top:604.7px;font-size:11.5px;line-height:15px;color:#0a0a0a;transform-origin:0 50%;transform:scaleX(0.9088);-webkit-text-stroke:.25px;">Дополнительное поле</span>
<div class="ck" style="left:1003px;top:626.300px;background:#0063b9;border-color:#0063b9"></div>
<span class="t" style="left:1018.9px;top:626.0px;font-size:11.5px;line-height:15px;color:#0a0a0a;transform-origin:0 50%;transform:scaleX(0.9073);-webkit-text-stroke:.25px;">Граница бумаги</span>
<div class="btn" style="left:1014.500px;top:653.500px;width:66px;height:19.500px;border-color:#0067c0;background:#fafcff"></div>
<span class="t" style="left:1039.0px;top:655.8px;font-size:11.5px;line-height:15px;color:#0a0a0a;transform-origin:0 50%;transform:scaleX(0.9023);-webkit-text-stroke:.25px;">OK</span>
<div class="btn" style="left:1088.500px;top:653.500px;width:66px;height:19.500px"></div>
<span class="t" style="left:1101.5px;top:655.8px;font-size:11.5px;line-height:15px;color:#0a0a0a;transform-origin:0 50%;transform:scaleX(0.8966);-webkit-text-stroke:.25px;">Отмена</span>
<!--DLGICONS--><svg width="1312" height="872" viewBox="0 0 1312 872" style="left:0;top:0">
<defs><linearGradient id="di" x1="0" y1="0" x2="0" y2="1"><stop offset="0" stop-color="#48cbea"/><stop offset="1" stop-color="#3a8cc6"/></linearGradient>
<linearGradient id="pg" x1="0" y1="0" x2="1" y2="1"><stop offset="0" stop-color="#ffffff"/><stop offset="1" stop-color="#d8ecf6"/></linearGradient></defs>
<!-- title icon -->
<path d="M848 420H859V431L856 433.800H846.200V422z" fill="url(#di)"/>
<path d="M848.300 428.800C848.300 425.500 850 423.600 852.300 423.600C854.800 423.600 856.300 425.600 856.400 428.300L860 429.500C860 430.800 858 431.300 855 430.800C852 430.300 850 429.500 848.300 428.800z" fill="#f4fafd"/>
<path d="M855.800 428.600C855.800 426.600 855 425 853.500 424.200" fill="none" stroke="#9ab0c0" stroke-width=".6"/>
<!-- close -->
<path d="M1145.200 421.500L1154.800 431.100M1154.800 421.500L1145.200 431.100" stroke="#1a1a1a" stroke-width="1.100"/>
<!-- chevrons -->
<g fill="none" stroke="#5a5a5a" stroke-width="1"><path d="M1123.500 477l3.700 3.700l3.700-3.700"/><path d="M965.300 526.300l3.700 3.700l3.700-3.700"/><path d="M965.300 552l3.700 3.700l3.700-3.700"/></g>
<!-- save -->
<path d="M1139.700 471.300H1151L1152.800 473V484.500H1139.700z" fill="#8c9c14" stroke="#4a5408" stroke-width=".8"/>
<rect x="1142.300" y="471.800" width="7.600" height="5.200" fill="#e8ecf4"/><path d="M1142.300 473.500H1150M1142.300 475.200H1150" stroke="#a8b4cc" stroke-width=".6"/>
<rect x="1142.500" y="479.300" width="7.500" height="5" fill="#3a3e1a"/><rect x="1147.300" y="480.300" width="1.800" height="3" fill="#d8dcc0"/>
<!-- page icon -->
<rect x="1120" y="524" width="19.500" height="25.600" fill="url(#pg)" stroke="#6c8cba" stroke-width="1"/>
<rect x="1137" y="524.500" width="2.400" height="6" fill="#e8f0f8" stroke="#4a5a78" stroke-width=".7"/>
<rect x="1124.300" y="542.500" width="14.800" height="7" fill="#4f7cb4"/><rect x="1130" y="546" width="5" height="2.500" fill="#f0f4f8"/>
<path d="M1129.500 542.500V549.500M1135.500 542.500V549.500M1124.300 545.500H1139" stroke="#2d4d80" stroke-width=".7"/>
<!-- check mark -->
<path d="M1006 632.800l2.500 2.600l4.800-5.200" fill="none" stroke="#ffffff" stroke-width="1.200"/>
<!-- bottom icons -->
<circle cx="856.700" cy="663.300" r="6.600" fill="#c0e6f6" stroke="#86c6e4" stroke-width="1"/>
<text x="856.700" y="667.300" text-anchor="middle" font-size="11" font-weight="700" fill="#1e3a5c" font-family="Liberation Sans,sans-serif">?</text>
<rect x="871.500" y="656.800" width="11" height="13.200" fill="#fbfbfb"/><rect x="871.100" y="656.400" width="11.800" height="2.200" fill="#35a8d8"/>
<path d="M871.600 656.500V670H878" fill="none" stroke="#2a3a4c" stroke-width="1"/><rect x="873.300" y="660" width="2" height="1.800" fill="#4aa0d8"/>
<path d="M885.51 664.93L886.66 665.12L886.66 666.48L885.51 666.67L885.22 667.57L886.03 668.40L885.24 669.50L884.19 668.98L883.43 669.54L883.60 670.69L882.31 671.10L881.77 670.07L880.83 670.07L880.29 671.10L879.00 670.69L879.17 669.54L878.41 668.98L877.36 669.50L876.57 668.40L877.38 667.57L877.09 666.67L875.94 666.48L875.94 665.12L877.09 664.93L877.38 664.03L876.57 663.20L877.36 662.10L878.41 662.62L879.17 662.06L879.00 660.91L880.29 660.50L880.83 661.53L881.77 661.53L882.31 660.50L883.60 660.91L883.43 662.06L884.19 662.62L885.24 662.10L886.03 663.20L885.22 664.03z" fill="#9a9a9a" stroke="#5a5a5a" stroke-width=".7"/><circle cx="881.300" cy="665.800" r="2.300" fill="#d8d8d8" stroke="#666" stroke-width=".6"/><circle cx="881.300" cy="665.800" r=".9" fill="#7a7a7a"/>
<rect x="894.600" y="656.700" width="12" height="12.700" fill="#fdfdfd" stroke="#2d4d9c" stroke-width="1.100"/>
<path d="M896.500 658.500V661.500M896.500 658.500H898.500M899.800 658.500H901.300V661.500H899.800zM902.500 658.500H904M903.300 658.500V661.500" fill="none" stroke="#1e2e6c" stroke-width=".9"/>
<circle cx="903.200" cy="666" r="2.500" fill="#fdeaea" stroke="#d84040" stroke-width="1.100"/><circle cx="903.200" cy="666" r=".9" fill="#d84040"/>
<path d="M914.500 655V671.500M958.400 655V671.500" stroke="#8e8e8e" stroke-width="1"/>
<rect x="923.800" y="661.300" width="14.600" height="7.700" fill="#4a78b8"/><path d="M938.400 659V669" stroke="#4a78b8" stroke-width="1"/>
<path d="M923.800 664.300H938M928 661.300V669M933.500 661.300V669" stroke="#2d4d80" stroke-width=".7"/><rect x="929" y="665.500" width="3.600" height="2" fill="#eef2f8"/><rect x="924.800" y="662.200" width="2.400" height="1.300" fill="#9ab4dc"/><rect x="929.500" y="662.200" width="3" height="1.300" fill="#9ab4dc"/><rect x="934.500" y="665.500" width="2.500" height="2" fill="#9ab4dc"/>
<path d="M945.100 661.700H951.700L948.400 665.600z" fill="#111"/>
<path d="M968.300 657.200H976.500L979.500 660.200V669.500H968.300z" fill="#fbfbfd" stroke="#3a68c0" stroke-width="1"/><path d="M976.500 657.200V660.200H979.500" fill="none" stroke="#3a68c0" stroke-width=".8"/>
<path d="M971 662.500C971.500 660.300 974.500 659.800 976 661.500L977 660.300V663.800H973.800L975 662.600C974 661.700 972.500 662 972.200 663zM977 664.800C976.500 667 973.500 667.500 972 665.800L971 667V663.500H974.200L973 664.700C974 665.600 975.500 665.300 975.800 664.300z" fill="#d83030"/>
</svg>

</div></body></html>
